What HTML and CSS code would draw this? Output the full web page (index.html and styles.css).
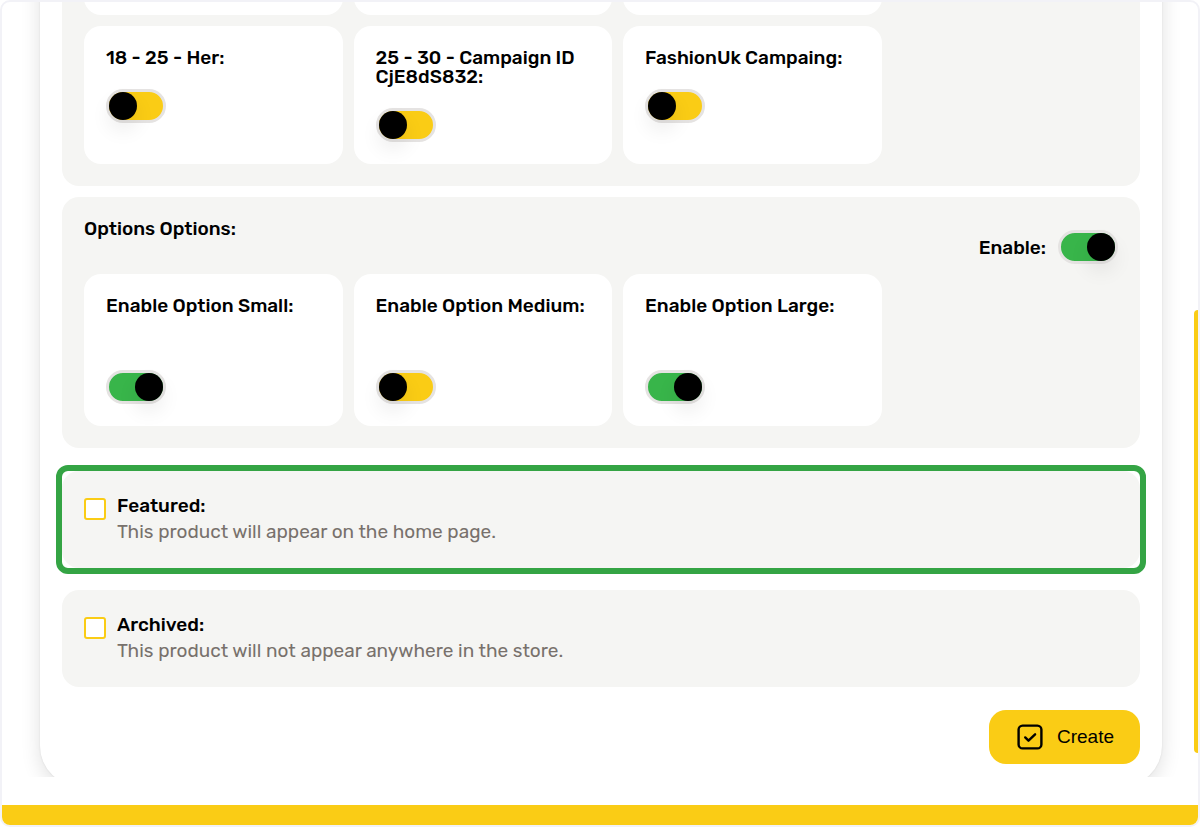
FILE: index.html
```html
<!DOCTYPE html>
<html lang="en">
<head>
    <meta charset="UTF-8">
    <meta name="viewport" content="width=device-width, initial-scale=1">
    <title>Create product</title>
    <link rel="stylesheet" href="styles.css">
</head>
<body>
<div class="window">
    <main class="content">
        <form class="panel">
            <section class="group">
                <div class="cards">
                    <div class="card card-blank"></div>
                    <div class="card card-blank"></div>
                    <div class="card card-blank"></div>
                    <div class="card">
                        <label for="her">18 - 25 - Her:</label>
                        <input class="switch" type="checkbox" id="her">
                    </div>
                    <div class="card">
                        <label for="campaign">25 - 30 - Campaign ID CjE8dS832:</label>
                        <input class="switch" type="checkbox" id="campaign">
                    </div>
                    <div class="card">
                        <label for="fashion">FashionUk Campaing:</label>
                        <input class="switch" type="checkbox" id="fashion">
                    </div>
                </div>
            </section>
            <section class="group">
                <div class="group-head">
                    <h2>Options Options:</h2>
                    <div class="enable">
                        <label for="enable">Enable:</label>
                        <input class="switch" type="checkbox" id="enable" checked>
                    </div>
                </div>
                <div class="cards options">
                    <div class="card">
                        <label for="small">Enable Option Small:</label>
                        <input class="switch" type="checkbox" id="small" checked>
                    </div>
                    <div class="card">
                        <label for="medium">Enable Option Medium:</label>
                        <input class="switch" type="checkbox" id="medium">
                    </div>
                    <div class="card">
                        <label for="large">Enable Option Large:</label>
                        <input class="switch" type="checkbox" id="large" checked>
                    </div>
                </div>
            </section>
            <div class="group check highlight">
                <input type="checkbox" id="featured">
                <div class="check-text">
                    <label for="featured">Featured:</label>
                    <p>This product will appear on the home page.</p>
                </div>
            </div>
            <div class="group check">
                <input type="checkbox" id="archived">
                <div class="check-text">
                    <label for="archived">Archived:</label>
                    <p>This product will not appear anywhere in the store.</p>
                </div>
            </div>
            <div class="actions">
                <button class="create" type="submit">
                    <svg width="26" height="26" viewBox="0 0 26 26" fill="none" stroke="#000" stroke-width="2.4" stroke-linecap="round" stroke-linejoin="round">
                        <rect x="1.6" y="1.6" width="22.8" height="22.8" rx="4"/>
                        <path d="M8.2 13.4l3.3 3.3 6.6-6.4"/>
                    </svg>
                    Create
                </button>
            </div>
        </form>
        <div class="scroll-thumb"></div>
    </main>
    <footer class="bar"></footer>
</div>
</body>
</html>
```
FILE: styles.css
```css
*{
    box-sizing: border-box;
}
body{
    margin: 0;
    font-family: Rubik, Roboto, sans-serif;
    font-size: 19px;
    line-height: 19px;
    color: #000;
    background: #fff;
}
h2,
p{
    margin: 0;
}
.window{
    display: flex;
    flex-direction: column;
    height: 100vh;
    border: 2px solid #f2f2f7;
    border-radius: 10px;
    overflow: hidden;
}
.content{
    position: relative;
    flex: 1;
    min-height: 0;
    overflow: hidden;
}
/*the form is scrolled down, its top is out of view*/
.panel{
    margin: -91px 36px 0 38px;
    padding: 22px;
    border-radius: 40px;
    background: #fff;
    box-shadow: 0 0 2px rgba(0,0,0,0.1), 0 6px 20px rgba(0,0,0,0.12);
}
.group{
    margin-bottom: 11px;
    padding: 22px;
    border-radius: 17px;
    background: #f5f5f3;
}
.group-head{
    display: flex;
    justify-content: space-between;
}
.group-head h2,
label{
    font-size: 19px;
    font-weight: 500;
}
.enable{
    display: flex;
    align-items: center;
    gap: 12px;
    padding: 11px 0 10px;
}
.cards{
    display: flex;
    flex-wrap: wrap;
    gap: 11px;
}
.card{
    display: flex;
    flex-direction: column;
    gap: 22px;
    flex: 0 0 25%;
    padding: 22px;
    border-radius: 17px;
    background: #fff;
}
.card-blank{
    min-height: 60px;
}
.options .card{
    gap: 55px;
}
/*switch*/
.switch{
    appearance: none;
    flex: none;
    display: flex;
    width: 60px;
    height: 34px;
    margin: 0;
    border: 3px solid #e5e3e2;
    border-radius: 17px;
    background: #facc15;
    cursor: pointer;
}
.switch::before{
    content: '';
    width: 28px;
    height: 28px;
    border-radius: 50%;
    background: #000;
    box-shadow: 0 10px 20px rgba(0,0,0,0.08);
}
.switch:checked{
    justify-content: flex-end;
    background: #38b54a;
}
/*checkbox rows*/
.check{
    display: flex;
    gap: 11px;
    margin-bottom: 23px;
    padding-bottom: 23px;
    line-height: 26px;
}
.check input{
    appearance: none;
    flex: none;
    width: 22px;
    height: 22px;
    margin: 5px 0 0;
    border: 2px solid #facc15;
    border-radius: 3px;
    background: #fff;
}
.check input:checked{
    background: #facc15;
}
.check p{
    color: #78716c;
}
.highlight{
    position: relative;
    margin-top: 23px;
    margin-bottom: 22px;
}
.highlight::after{
    content: '';
    position: absolute;
    inset: -6px;
    border: 6px solid #34a444;
    border-radius: 12px;
    pointer-events: none;
}
.actions{
    display: flex;
    justify-content: flex-end;
}
.create{
    display: flex;
    align-items: center;
    gap: 14px;
    height: 54px;
    padding: 0 26px 0 28px;
    border: 0;
    border-radius: 17px;
    background: #facc15;
    color: #000;
    font-family: "Liberation Sans", Arial, sans-serif;
    font-size: 19px;
}
.scroll-thumb{
    position: absolute;
    top: 308px;
    right: 0;
    width: 4px;
    height: 443px;
    border-radius: 4px 0 0 4px;
    background: #facc15;
}
.bar{
    height: 20px;
    margin-top: 28px;
    background: #facc15;
}
```
